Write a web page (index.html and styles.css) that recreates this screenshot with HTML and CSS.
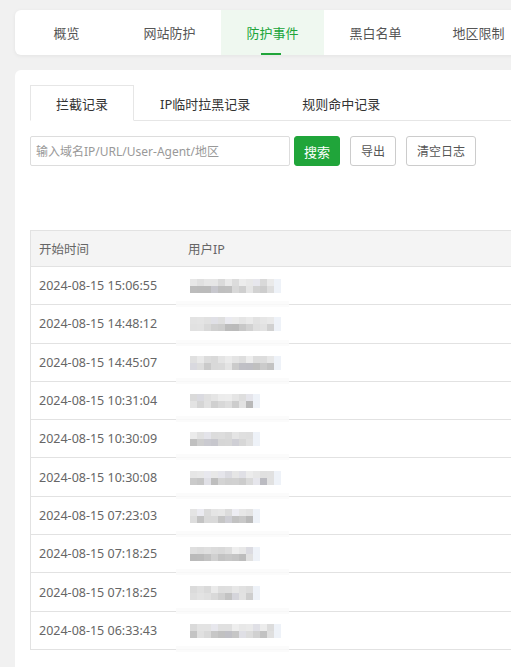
FILE: index.html
```html
<!DOCTYPE html>
<html lang="zh-CN">
<head>
<meta charset="utf-8">
<title>防护事件</title>
<link rel="stylesheet" href="styles.css">
</head>
<body>
<nav class="topnav">
  <a class="topnav-item">概览</a>
  <a class="topnav-item">网站防护</a>
  <a class="topnav-item active">防护事件</a>
  <a class="topnav-item">黑白名单</a>
  <a class="topnav-item">地区限制</a>
</nav>
<section class="panel">
  <div class="subtabs">
    <div class="subtab active">拦截记录</div>
    <div class="subtab">IP临时拉黑记录</div>
    <div class="subtab">规则命中记录</div>
    <div class="subtab-fill"></div>
  </div>
  <div class="toolbar">
    <input class="search" type="text" placeholder="输入域名IP/URL/User-Agent/地区">
    <button class="btn btn-primary">搜索</button>
    <button class="btn">导出</button>
    <button class="btn">清空日志</button>
  </div>
  <table class="log">
    <thead>
      <tr><th class="c-time">开始时间</th><th>用户IP</th></tr>
    </thead>
    <tbody>
      <tr><td>2024-08-15 15:06:55</td><td class="ip"><span class="mosaic" data-w="13" data-s="3"></span></td></tr>
      <tr><td>2024-08-15 14:48:12</td><td class="ip"><span class="mosaic" data-w="13" data-s="7"></span></td></tr>
      <tr><td>2024-08-15 14:45:07</td><td class="ip"><span class="mosaic" data-w="13" data-s="11"></span></td></tr>
      <tr><td>2024-08-15 10:31:04</td><td class="ip"><span class="mosaic" data-w="10" data-s="17"></span></td></tr>
      <tr><td>2024-08-15 10:30:09</td><td class="ip"><span class="mosaic" data-w="10" data-s="23"></span></td></tr>
      <tr><td>2024-08-15 10:30:08</td><td class="ip"><span class="mosaic" data-w="13" data-s="29"></span></td></tr>
      <tr><td>2024-08-15 07:23:03</td><td class="ip"><span class="mosaic" data-w="10" data-s="31"></span></td></tr>
      <tr><td>2024-08-15 07:18:25</td><td class="ip"><span class="mosaic" data-w="10" data-s="37"></span></td></tr>
      <tr><td>2024-08-15 07:18:25</td><td class="ip"><span class="mosaic" data-w="10" data-s="41"></span></td></tr>
      <tr><td>2024-08-15 06:33:43</td><td class="ip"><span class="mosaic" data-w="13" data-s="43"></span></td></tr>
    </tbody>
  </table>
</section>
<script src="script.js"></script>
</body>
</html>
```
FILE: styles.css
```css
html { overflow: hidden; }
body {
  margin: 0;
  background: #f1f1f1;
  font-family: "Noto Sans", "Noto Sans CJK SC", sans-serif;
  font-size: 13px;
  color: #666;
  width: 620px;
  padding: 10px 0 0 15px;
}
.topnav {
  display: flex;
  height: 45px;
  background: #fff;
  border-radius: 6px;
  box-shadow: 0 1px 4px rgba(0,0,0,0.06);
}
.topnav-item {
  position: relative;
  width: 103px;
  display: flex;
  align-items: center;
  justify-content: center;
  font-size: 13px;
  color: #555;
  cursor: pointer;
}
.topnav-item.active {
  background: #eff8f0;
  color: #20a53a;
}
.topnav-item.active::after {
  content: "";
  position: absolute;
  bottom: 0;
  left: 40px;
  width: 20px;
  height: 2px;
  background: #20a53a;
}
.panel {
  margin-top: 15px;
  background: #fff;
  border-radius: 6px 0 0 0;
  padding: 15px 0 18px 15px;
  min-height: 580px;
}
.subtabs {
  display: flex;
  height: 36px;
}
.subtab {
  padding: 0 26px;
  display: flex;
  align-items: center;
  font-size: 13px;
  color: #333;
  border-bottom: 1px solid #e6e6e6;
  border-top: 1px solid transparent;
}
.subtab.active {
  width: 104px;
  box-sizing: border-box;
  justify-content: center;
  padding: 0;
  border: 1px solid #e6e6e6;
  border-bottom-color: #fff;
}
.subtab-fill {
  flex: 1;
  border-bottom: 1px solid #e6e6e6;
}
.toolbar {
  display: flex;
  align-items: center;
  margin-top: 15px;
  height: 30px;
}
.search {
  box-sizing: border-box;
  width: 260px;
  height: 30px;
  border: 1px solid #ddd;
  border-radius: 2px;
  padding: 0 5px;
  font: inherit;
  font-size: 12px;
  color: #333;
  outline: none;
}
.search::placeholder { color: #999; }
.btn {
  box-sizing: border-box;
  height: 30px;
  padding: 0 10px;
  margin-left: 10px;
  background: #fff;
  border: 1px solid #ccc;
  border-radius: 3px;
  font: inherit;
  font-size: 12px;
  color: #555;
}
.btn-primary {
  margin-left: 4px;
  background: #20a53a;
  border-color: #20a53a;
  color: #fff;
  width: 46px;
  padding: 0;
  font-size: 13px;
}
.log {
  margin-top: 64px;
  width: 100%;
  border-collapse: collapse;
  border: 1px solid #e2e2e2;
  border-right: none;
  font-size: 12.5px;
}
.log th {
  background: #f4f4f4;
  text-align: left;
  font-weight: normal;
  color: #666;
  height: 35px;
  padding: 0 8px;
  border-bottom: 1px solid #e2e2e2;
}
.log th.c-time, .log td:first-child { width: 133px; }
.log td {
  height: 37.3px;
  padding: 0 8px;
  border-bottom: 1px solid #e2e2e2;
  color: #666;
  white-space: nowrap;
}
.log td.ip { position: relative; padding-left: 10px; }
.log td.ip::after {
  content: "";
  position: absolute;
  left: -4px;
  bottom: -3px;
  width: 113px;
  height: 6px;
  background: rgba(250,250,250,0.85);
}
.mosaic {
  display: grid;
  grid-auto-flow: column;
  grid-template-rows: 7px 7px;
  grid-auto-columns: 7px;
  width: max-content;
  margin-top: 1px;
}
.mosaic i { display: block; }
```
FILE: script.js
```js
document.querySelectorAll('.mosaic').forEach(function (el) {
  var w = parseInt(el.dataset.w, 10);
  var s = parseInt(el.dataset.s, 10);
  function rnd() { s = (s * 9301 + 49297) % 233280; return s / 233280; }
  for (var c = 0; c < w; c++) {
    for (var r = 0; r < 2; r++) {
      var base = r === 0 ? 238 : 230;
      var v = Math.round(base - rnd() * (r === 0 ? 22 : 45));
      var tint = rnd() < 0.15 ? 6 : 0;
      var cell = document.createElement('i');
      cell.style.background = 'rgb(' + v + ',' + v + ',' + Math.min(255, v + tint) + ')';
      if (c === w - 1) cell.style.background = 'rgb(238,242,248)';
      el.appendChild(cell);
    }
  }
});
```
